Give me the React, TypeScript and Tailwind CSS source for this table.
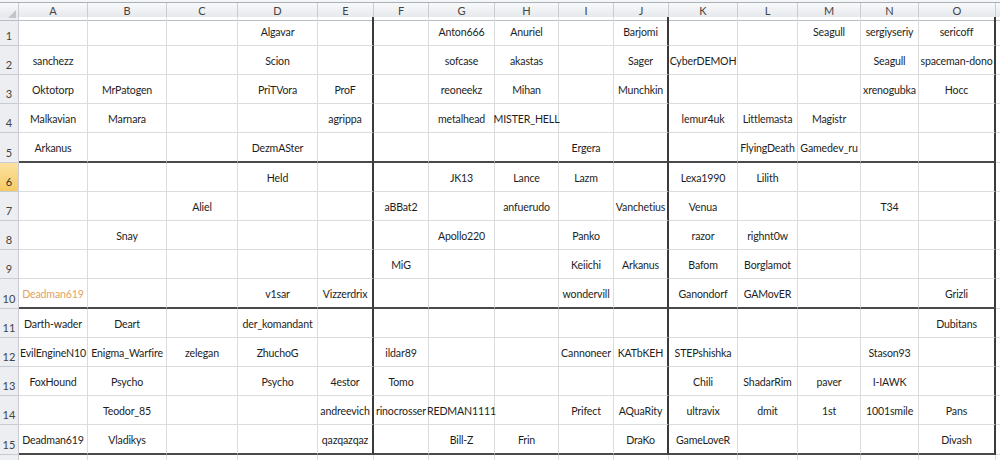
const cols = ['A', 'B', 'C', 'D', 'E', 'F', 'G', 'H', 'I', 'J', 'K', 'L', 'M', 'N', 'O']

// rows 1..15, columns A..O
const data: string[][] = [
  ['', '', '', 'Algavar', '', '', 'Anton666', 'Anuriel', '', 'Barjomi', '', '', 'Seagull', 'sergiyseriy', 'sericoff'],
  ['sanchezz', '', '', 'Scion', '', '', 'sofcase', 'akastas', '', 'Sager', 'CyberDEMOH', '', '', 'Seagull', 'spaceman-dono'],
  ['Oktotorp', 'MrPatogen', '', 'PriTVora', 'ProF', '', 'reoneekz', 'Mihan', '', 'Munchkin', '', '', '', 'xrenogubka', 'Hocc'],
  ['Malkavian', 'Marnara', '', '', 'agrippa', '', 'metalhead', 'MISTER_HELL', '', '', 'lemur4uk', 'Littlemasta', 'Magistr', '', ''],
  ['Arkanus', '', '', 'DezmASter', '', '', '', '', 'Ergera', '', '', 'FlyingDeath', 'Gamedev_ru', '', ''],
  ['', '', '', 'Held', '', '', 'JK13', 'Lance', 'Lazm', '', 'Lexa1990', 'Lilith', '', '', ''],
  ['', '', 'Aliel', '', '', 'aBBat2', '', 'anfuerudo', '', 'Vanchetius', 'Venua', '', '', 'T34', ''],
  ['', 'Snay', '', '', '', '', 'Apollo220', '', 'Panko', '', 'razor', 'righnt0w', '', '', ''],
  ['', '', '', '', '', 'MiG', '', '', 'Keiichi', 'Arkanus', 'Bafom', 'Borglamot', '', '', ''],
  ['Deadman619', '', '', 'v1sar', 'Vizzerdrix', '', '', '', 'wondervill', '', 'Ganondorf', 'GAMovER', '', '', 'Grizli'],
  ['Darth-wader', 'Deart', '', 'der_komandant', '', '', '', '', '', '', '', '', '', '', 'Dubitans'],
  ['EvilEngineN10', 'Enigma_Warfire', 'zelegan', 'ZhuchoG', '', 'ildar89', '', '', 'Cannoneer', 'KATbKEH', 'STEPshishka', '', '', 'Stason93', ''],
  ['FoxHound', 'Psycho', '', 'Psycho', '4estor', 'Tomo', '', '', '', '', 'Chili', 'ShadarRim', 'paver', 'I-IAWK', ''],
  ['', 'Teodor_85', '', '', 'andreevich', 'rinocrosser', 'REDMAN1111', '', 'Prifect', 'AQuaRity', 'ultravix', 'dmit', '1st', '1001smile', 'Pans'],
  ['Deadman619', 'Vladikys', '', '', 'qazqazqaz', '', 'Bill-Z', 'Frin', '', 'DraKo', 'GameLoveR', '', '', '', 'Divash'],
]

const gridCols = 'grid grid-cols-[19px_69px_79px_71px_80px_56px_55px_66px_64px_55px_55px_69px_60px_63px_58px_77px_1fr]'

function Cell({ text, row, col }: { text: string; row: number; col: number }) {
  const thickRight = row <= 15 && (col === 4 || col === 9 || col === 14)
  const thickBottom = row === 5 || row === 10 || row === 15
  const orange = row === 10 && col === 0
  return (
    <div
      className={[
        'flex items-center justify-center whitespace-nowrap pt-[3px]',
        thickRight ? 'border-r-2 border-r-[#3a3a3a]' : 'border-r border-r-[#dadcdd]',
        thickBottom ? 'border-b-2 border-b-[#4a4a4a]' : 'border-b border-b-[#dadcdd]',
        orange ? 'text-[#e3a267]' : 'text-[#1e1e1e]',
      ].join(' ')}
    >
      {text}
    </div>
  )
}

export default function App() {
  const rows = [...data, new Array(15).fill('')]
  return (
    <div className="w-[1000px] h-[460px] overflow-hidden bg-white text-[10.6px] tracking-[-0.15px] font-['Lato','Liberation_Sans',sans-serif]">
      {/* strip over the headers */}
      <div className="h-[3px] bg-[#f4f5f6] border-b border-b-[#aab0b8]" />

      {/* column headers */}
      <div className={`${gridCols} h-[14px] bg-gradient-to-b from-[#f8f9fa] to-[#e6e9ed] text-[#444] text-[11px] tracking-normal`}>
        <div className="relative border-r border-r-[#c8ccd2] border-b border-b-[#b9bec6]">
          <div className="absolute right-[2px] bottom-[2px] w-0 h-0 border-l-[8px] border-l-transparent border-b-[8px] border-b-[#c2c6cc]" />
        </div>
        {cols.map((c) => (
          <div key={c} className="flex items-center justify-center border-r border-r-[#c8ccd2] border-b border-b-[#b9bec6]">
            {c}
          </div>
        ))}
        <div className="border-b border-b-[#b9bec6]" />
      </div>

      {/* rows */}
      {rows.map((r, i) => {
        const n = i + 1
        const selected = n === 6
        return (
          <div key={n} className={`${gridCols} ${n % 5 === 0 ? 'h-[30px]' : 'h-[29px]'}`}>
            <div
              className={[
                'flex items-end justify-center pb-[1px] text-[11px] tracking-normal border-r border-r-[#c8ccd2] border-b border-b-[#c8ccd2]',
                selected ? 'bg-gradient-to-b from-[#fbe1a0] to-[#f5cb63] text-[#333]' : 'bg-[#eceef1] text-[#444]',
              ].join(' ')}
            >
              {n <= 15 ? n : ''}
            </div>
            {r.map((t, j) => (
              <Cell key={j} text={t} row={n} col={j} />
            ))}
            <div className="border-b border-b-[#dadcdd]" />
          </div>
        )
      })}
    </div>
  )
}
